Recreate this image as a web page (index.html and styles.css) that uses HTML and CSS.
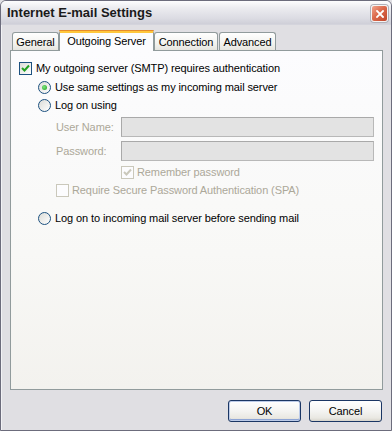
FILE: index.html
```html
<!DOCTYPE html>
<html>
<head>
<meta charset="utf-8">
<link rel="stylesheet" href="styles.css">
</head>
<body>
<div class="window">
  <div class="titlebar">
    <span class="title">Internet E-mail Settings</span>
    <span class="close"><svg width="8" height="8" viewBox="0 0 8 8"><path d="M1 1 L7 7 M7 1 L1 7" stroke="#fff" stroke-width="1.8" stroke-linecap="square"/></svg></span>
  </div>
  <div class="client">
    <div class="tabs">
      <div class="tab t-general">General</div>
      <div class="tab tab-active t-out">Outgoing Server</div>
      <div class="tab t-conn">Connection</div>
      <div class="tab t-adv">Advanced</div>
    </div>
    <div class="panel">
      <div class="row">
        <span class="check"><svg width="9" height="9" viewBox="0 0 9 9"><path d="M1 4 L3.5 6.5 L8 1.5" fill="none" stroke="#21a121" stroke-width="2"/></svg></span>
        <span class="lbl">My outgoing server (SMTP) requires authentication</span>
      </div>
      <div class="row indent r2">
        <span class="radio on"><span class="dot"></span></span>
        <span class="lbl">Use same settings as my incoming mail server</span>
      </div>
      <div class="row indent">
        <span class="radio"></span>
        <span class="lbl">Log on using</span>
      </div>
      <div class="field f1">
        <span class="flabel">User Name:</span>
        <span class="input"></span>
      </div>
      <div class="field f2">
        <span class="flabel">Password:</span>
        <span class="input"></span>
      </div>
      <div class="row remember">
        <span class="check disabled"><svg width="9" height="9" viewBox="0 0 9 9"><path d="M1 4 L3.5 6.5 L8 1.5" fill="none" stroke="#cac8bb" stroke-width="2"/></svg></span>
        <span class="lbl dis">Remember password</span>
      </div>
      <div class="row spa">
        <span class="check disabled"></span>
        <span class="lbl dis">Require Secure Password Authentication (SPA)</span>
      </div>
      <div class="row indent r6">
        <span class="radio"></span>
        <span class="lbl">Log on to incoming mail server before sending mail</span>
      </div>
    </div>
    <div class="buttons">
      <div class="btn default">OK</div>
      <div class="btn">Cancel</div>
    </div>
  </div>
</div>
</body>
</html>
```
FILE: styles.css
```css
html, body {
  margin: 0;
  padding: 0;
  background: #e0dfe3;
}
body {
  font-family: "Liberation Sans", Arial, sans-serif;
  font-size: 11px;
  letter-spacing: -0.1px;
  color: #000;
}
.window {
  width: 392px;
  height: 431px;
  box-sizing: border-box;
  border: 1px solid #6c6c7c;
  border-radius: 6px 6px 0 0;
  background: #e0dfe3;
  display: flex;
  flex-direction: column;
  overflow: hidden;
}
.titlebar {
  height: 23px;
  flex: none;
  display: flex;
  align-items: center;
  justify-content: space-between;
  padding: 0 3px 0 6px;
  background: linear-gradient(#fdfdfe 0%, #ececf0 30%, #dcdce3 75%, #cfcfd8 100%);
  border-bottom: 1px solid #d4d4dc;
}
.title {
  font-weight: bold;
  font-size: 13px;
  color: #1a1a1a;
  letter-spacing: 0;
}
.close {
  width: 15px;
  height: 15px;
  border: 1px solid #f4f4f4;
  border-radius: 3px;
  background: linear-gradient(135deg, #f0a58e 0%, #dc6a4c 45%, #c0452b 100%);
  display: flex;
  align-items: center;
  justify-content: center;
  margin-top: 2px;
  box-shadow: 0 0 0 1px #b0b0b8;
}
.client {
  flex: 1;
  display: flex;
  flex-direction: column;
  padding: 5px 8px 0 8px;
  border-left: 1px solid #f2f2f5;
}
.tabs {
  height: 20px;
  display: flex;
  align-items: flex-end;
  padding-left: 2px;
  position: relative;
  z-index: 2;
}
.tab {
  box-sizing: border-box;
  height: 18px;
  border: 1px solid #919b9c;
  border-bottom: none;
  border-radius: 3px 3px 0 0;
  background: linear-gradient(#ffffff, #f3f3ef 60%, #e6e5df);
  display: flex;
  align-items: center;
  justify-content: center;
  padding-top: 1px;
}
.t-general { width: 47px; }
.t-out { width: 95px; }
.t-conn { width: 64px; }
.t-adv { width: 57px; margin-left: 1px; }
.tab-active {
  height: 21px;
  margin-bottom: -1px;
  background: #fcfcfe;
  border-top: 3px solid #ffc73c;
  padding-top: 0;
  padding-bottom: 2px;
  position: relative;
}
.tab-active::before {
  content: "";
  position: absolute;
  left: -1px;
  right: -1px;
  top: -3px;
  height: 1px;
  background: #e68b2c;
  border-radius: 3px 3px 0 0;
}
.panel {
  box-sizing: border-box;
  height: 340px;
  flex: none;
  border: 1px solid #919b9c;
  background: linear-gradient(#fcfcfe, #f8f8f6 60%, #f3f2ee);
  padding: 8px 8px 0 8px;
}
.row {
  height: 18px;
  display: flex;
  align-items: center;
  gap: 4px;
}
.indent { margin-left: 19px; }
.r2 { margin-top: 1px; }
.r6 { margin-top: 10px; }
.remember { margin-top: 2px; margin-left: 102px; gap: 3px; }
.spa { margin-left: 37px; gap: 3px; }
.check {
  box-sizing: border-box;
  width: 13px;
  height: 13px;
  flex: none;
  border: 1px solid #1c5180;
  background: linear-gradient(135deg, #dcdcd7, #ffffff);
  display: flex;
  align-items: center;
  justify-content: center;
}
.check.disabled {
  border-color: #cac8bb;
  background: #fcfcfe;
}
.radio {
  box-sizing: border-box;
  width: 13px;
  height: 13px;
  flex: none;
  border: 1px solid #1c5180;
  border-radius: 50%;
  background: linear-gradient(135deg, #dcdcd7, #ffffff);
  display: flex;
  align-items: center;
  justify-content: center;
}
.dot {
  width: 5px;
  height: 5px;
  border-radius: 50%;
  background: radial-gradient(circle at 40% 40%, #7ee57e, #21a121);
}
.lbl { white-space: nowrap; }
.dis { color: #aca899; }
.field {
  display: flex;
  align-items: center;
  margin-left: 37px;
  height: 20px;
}
.f1 { margin-top: 3px; }
.f2 { margin-top: 4px; }
.flabel {
  width: 65px;
  color: #aca899;
}
.input {
  box-sizing: border-box;
  width: 253px;
  height: 20px;
  border: 1px solid #b5b2a8;
  border-color: #a9a9a9 #b8b8b8 #b8b8b8 #a9a9a9;
  background: #e3e3e3;
}
.buttons {
  display: flex;
  justify-content: flex-end;
  gap: 8px;
  margin-top: 10px;
  padding-right: 1px;
}
.btn {
  box-sizing: border-box;
  width: 73px;
  height: 22px;
  border: 1px solid #1b3664;
  border-radius: 3px;
  background: linear-gradient(#ffffff, #f4f4f2 50%, #e9e8e2 85%, #d7d4cb);
  display: flex;
  align-items: center;
  justify-content: center;
}
.btn.default {
  box-shadow: inset 0 0 0 1px #bccbe8, inset 0 -1px 0 1px #8ea5d5;
}
```
